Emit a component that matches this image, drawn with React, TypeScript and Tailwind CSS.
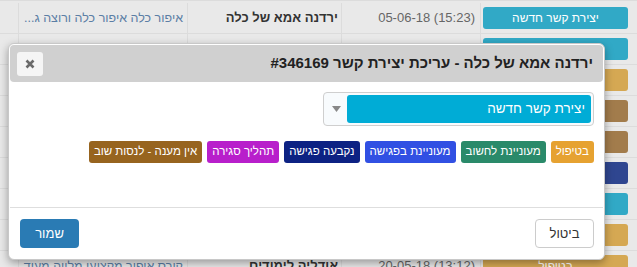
import React from "react";

const rows = [
  { btn: "יצירת קשר חדשה", color: "bg-[#31a9c6]", date: "05-06-18 (15:23)", name: "ירדנה אמא של כלה", note: "איפור כלה איפור כלה ורוצה ג..." },
  { btn: "יצירת קשר חדשה", color: "bg-[#31a9c6]", date: "05-06-18 (14:10)", name: "שירן", note: "איפור כלה" },
  { btn: "בטיפול", color: "bg-[#d5a853]", date: "04-06-18 (11:02)", name: "מורן", note: "איפור ערב" },
  { btn: "אין מענה", color: "bg-[#a27c4c]", date: "03-06-18 (19:40)", name: "ליאת", note: "איפור כלה" },
  { btn: "אין מענה", color: "bg-[#a27c4c]", date: "01-06-18 (09:15)", name: "הדס", note: "איפור כלה" },
  { btn: "נקבעה פגישה", color: "bg-[#2f4690]", date: "30-05-18 (16:55)", name: "נועה", note: "איפור כלה" },
  { btn: "יצירת קשר חדשה", color: "bg-[#31a9c6]", date: "28-05-18 (12:30)", name: "אורית", note: "איפור ערב" },
  { btn: "בטיפול", color: "bg-[#d5a853]", date: "25-05-18 (10:20)", name: "מיכל", note: "איפור כלה" },
  { btn: "בטיפול", color: "bg-[#d5a853]", date: "20-05-18 (13:12)", name: "אודליה לימודים", note: "קורס איפור מקצועי מלווה מעוד" },
];

const tags = [
  { t: "בטיפול", c: "bg-[#e6a231]" },
  { t: "מעוניינת לחשוב", c: "bg-[#2a8a6a]" },
  { t: "מעוניינת בפגישה", c: "bg-[#3150e3]" },
  { t: "נקבעה פגישה", c: "bg-[#0d2283]" },
  { t: "תהליך סגירה", c: "bg-[#b81fcb]" },
  { t: "אין מענה - לנסות שוב", c: "bg-[#97641f]" },
];

export default function App() {
  return (
    <div
      className="relative w-[637px] h-[267px] overflow-hidden bg-[#e9e9e9]"
      style={{ fontFamily: '"Liberation Sans", Arial, sans-serif' }}
    >
      {/* background table */}
      <div dir="rtl" className="flex flex-col pt-[2px] border-t border-[#dcdcdc]">
        {rows.map((r, i) => (
          <div key={i} className="flex h-[31px] shrink-0 border-b border-[#dcdcdc]">
            <div className="w-[157px] shrink-0 flex items-center pr-[9px] pl-[2px] border-l border-[#dcdcdc]">
              <div className={`w-[146px] h-[22px] rounded-[3px] ${r.color} text-white text-[12px] flex items-center justify-center`}>
                {r.btn}
              </div>
            </div>
            <div className="w-[139px] shrink-0 flex items-center pr-[5px] border-l border-[#dcdcdc] text-[13px] text-[#666] whitespace-nowrap" dir="ltr">
              <span className="w-full text-right">{r.date}</span>
            </div>
            <div className="w-[154px] shrink-0 flex items-center pr-[3px] border-l border-[#dcdcdc] text-[13px] font-bold text-[#333] whitespace-nowrap">
              {r.name}
            </div>
            <div className="w-[169px] shrink-0 flex items-center pr-[4px] border-l border-[#dcdcdc] text-[12.5px] text-[#5b7ea5] whitespace-nowrap overflow-hidden">
              {r.note}
            </div>
            <div className="flex-1" />
          </div>
        ))}
      </div>

      {/* modal */}
      <div
        dir="rtl"
        className="absolute left-[8px] top-[43px] w-[597px] bg-white border border-[#c8c8c8] rounded-[6px] shadow-[0_3px_9px_rgba(0,0,0,0.35)] flex flex-col"
      >
        <div className="mx-[1px] mt-[1px] h-[37px] bg-[#d0d0d0] rounded-[4px] flex items-center justify-between pr-[10px] pl-[7px]">
          <div className="text-[15px] font-bold text-[#222] whitespace-nowrap">
            ירדנה אמא של כלה - עריכת יצירת קשר #346169
          </div>
          <div className="w-[26px] h-[24px] bg-[#f5f5f5] rounded-[3px] flex items-center justify-center">
            <svg width="10" height="10" viewBox="0 0 10 10">
              <path d="M1.5 1.5 L8.5 8.5 M8.5 1.5 L1.5 8.5" stroke="#6a6a6a" strokeWidth="2.6" strokeLinecap="butt" />
            </svg>
          </div>
        </div>

        <div className="pr-[10px] pl-[12px] pt-[10px] pb-[44px] flex flex-col items-start">
          <div className="w-[271px] h-[34px] border border-[#cfcfcf] rounded-[4px] bg-[#f8fbfd] flex items-center pr-[2px] pl-[4px] gap-[3px]">
            <div className="flex-1 h-[28px] rounded-[3px] bg-[#00acd6] text-white text-[13.5px] flex items-center pr-[6px]">
              יצירת קשר חדשה
            </div>
            <div className="w-[16px] flex items-center justify-center">
              <svg width="9" height="6" viewBox="0 0 9 6">
                <path d="M0 0 L9 0 L4.5 6 Z" fill="#888" />
              </svg>
            </div>
          </div>
          <div className="mt-[15px] flex gap-[5px]">
            {tags.map((t) => (
              <div
                key={t.t}
                className={`${t.c} h-[22px] rounded-[3px] px-[5px] text-white text-[11.5px] flex items-center whitespace-nowrap`}
              >
                {t.t}
              </div>
            ))}
          </div>
        </div>

        <div className="mx-[1px] h-px bg-[#dedede]" />

        <div className="pt-[11px] pb-[11px] pr-[10px] pl-[11px] flex justify-between">
          <div className="w-[59px] h-[29px] border border-[#ccc] rounded-[4px] bg-white text-[#333] text-[13px] flex items-center justify-center">
            ביטול
          </div>
          <div className="w-[59px] h-[29px] rounded-[4px] bg-[#2a7bb4] text-white text-[13px] flex items-center justify-center">
            שמור
          </div>
        </div>
      </div>
    </div>
  );
}
